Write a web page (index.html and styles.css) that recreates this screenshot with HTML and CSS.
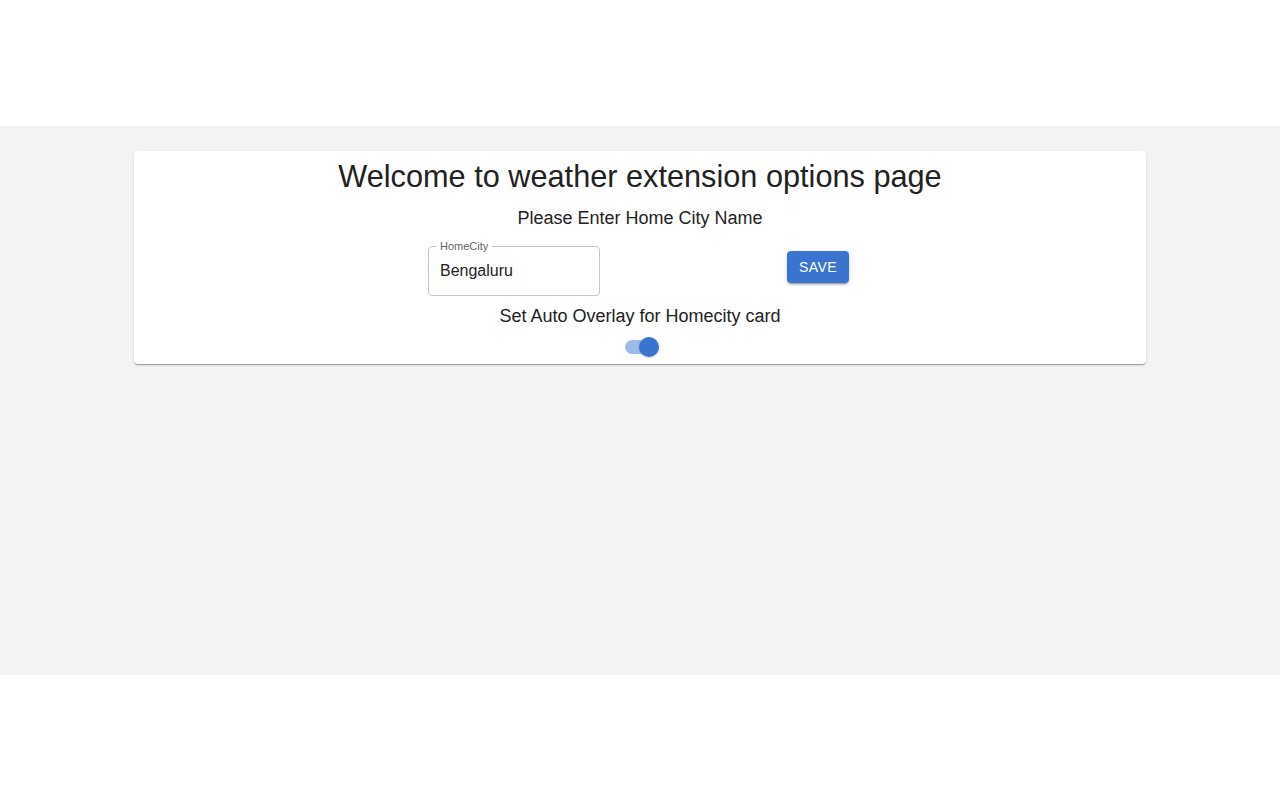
FILE: index.html
```html
<!DOCTYPE html>
<html lang="en">
<head>
    <meta charset="UTF-8">
    <meta name="viewport" content="width=device-width, initial-scale=1.0">
    <title>Weather Extension Options</title>
    <link rel="stylesheet" href="styles.css">
</head>
<body>
    <div class="main">
        <div class="card">
            <h1>Welcome to weather extension options page</h1>
            <p class="label">Please Enter Home City Name</p>

            <div class="city-row">
                <fieldset class="field">
                    <legend>HomeCity</legend>
                    <input type="text" value="Bengaluru">
                </fieldset>
                <button class="btn">SAVE</button>
            </div>

            <p class="label">Set Auto Overlay for Homecity card</p>
            <label class="switch">
                <span class="track"></span>
                <span class="thumb"></span>
            </label>
        </div>
    </div>
</body>
</html>
```

FILE: styles.css
```css
* {
    margin: 0;
    padding: 0;
    box-sizing: border-box;
}

body {
    font-family: 'Liberation Sans', Arial, Helvetica, sans-serif;
    background: white;
    color: #222;
}

.main {
    margin-top: 126px;
    height: 549px;
    background: #f3f3f3;
    padding: 25px 134px;
}

.card {
    background: white;
    border-radius: 4px;
    box-shadow: 0 2px 1px -1px rgba(0,0,0,0.2), 0 1px 1px 0 rgba(0,0,0,0.14), 0 1px 3px 0 rgba(0,0,0,0.12);
    padding: 5px 16px 7px;
    display: flex;
    flex-direction: column;
    align-items: center;
}

h1 {
    font-size: 30.7px;
    font-weight: normal;
    line-height: 42px;
    color: #222;
}

.label {
    font-size: 18px;
    line-height: 26px;
    margin-top: 7px;
}

.city-row {
    display: flex;
    align-items: flex-start;
    gap: 187px;
    margin-top: 10px;
    margin-right: 3px;
}

.field {
    width: 172px;
    height: 55px;
    border: 1px solid #c4c4c4;
    border-radius: 4px;
    padding: 0 11px;
}

.field legend {
    font-size: 11px;
    color: #666;
    padding: 0 4px;
    margin-left: -4px;
    line-height: 11px;
}

.field input {
    border: none;
    outline: none;
    font-family: inherit;
    font-size: 16px;
    color: #222;
    width: 100%;
    margin-top: 10px;
    background: transparent;
}

.btn {
    background: #3a74d0;
    color: white;
    border: none;
    border-radius: 4px;
    width: 62px;
    height: 32px;
    margin-top: 10px;
    font-family: inherit;
    font-size: 14px;
    font-weight: 500;
    letter-spacing: 0.4px;
    box-shadow: 0 3px 1px -2px rgba(0,0,0,0.2), 0 2px 2px 0 rgba(0,0,0,0.14), 0 1px 5px 0 rgba(0,0,0,0.12);
    cursor: pointer;
}

.switch {
    position: relative;
    display: block;
    width: 34px;
    height: 20px;
    margin-top: 8px;
    margin-left: 4px;
}

.track {
    position: absolute;
    left: 0;
    top: 3px;
    width: 30px;
    height: 14px;
    border-radius: 7px;
    background: #9dbbe8;
}

.thumb {
    position: absolute;
    right: 0;
    top: 0;
    width: 20px;
    height: 20px;
    border-radius: 50%;
    background: #3a74d0;
    box-shadow: 0 1px 2px rgba(0,0,0,0.2);
}
```
